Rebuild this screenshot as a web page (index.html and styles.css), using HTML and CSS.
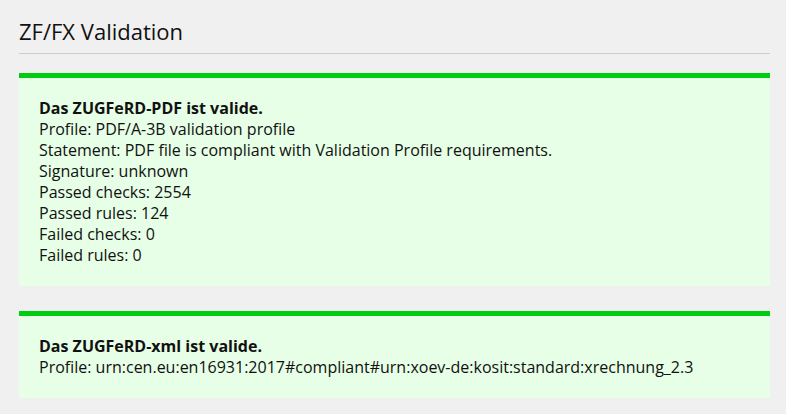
FILE: index.html
```html
<!DOCTYPE html>
<html lang="de">
<head>
  <meta charset="UTF-8">
  <title>ZF/FX Validation</title>
  <link rel="stylesheet" href="styles.css">
</head>
<body>
  <div class="page">
    <h2>ZF/FX Validation</h2>

    <div class="result valid">
      <strong>Das ZUGFeRD-PDF ist valide.</strong><br>
      Profile: PDF/A-3B validation profile<br>
      Statement: PDF file is compliant with Validation Profile requirements.<br>
      Signature: unknown<br>
      Passed checks: 2554<br>
      Passed rules: 124<br>
      Failed checks: 0<br>
      Failed rules: 0
    </div>

    <div class="result valid">
      <strong>Das ZUGFeRD-xml ist valide.</strong><br>
      Profile: urn:cen.eu:en16931:2017#compliant#urn:xoev-de:kosit:standard:xrechnung_2.3
    </div>
  </div>
</body>
</html>
```

FILE: styles.css
```css
body {
  font-family: "Open Sans", Arial, sans-serif;
  margin: 0;
  padding: 0;
  background-color: #f0f0f0;
  color: #111;
}
.page {
  margin: 0 16px 0 19px;
  padding-top: 16px;
}
h2 {
  font-size: 22px;
  font-weight: normal;
  line-height: 30px;
  margin: 0 0 19px;
  padding-bottom: 7px;
  border-bottom: 1px solid #cccccc;
}
.result {
  font-size: 16px;
  line-height: 21px;
  padding: 20px;
  margin-bottom: 25px;
}
.valid {
  background-color: #e6ffe6;
  border-top: 5px solid #00cc11;
}
```
